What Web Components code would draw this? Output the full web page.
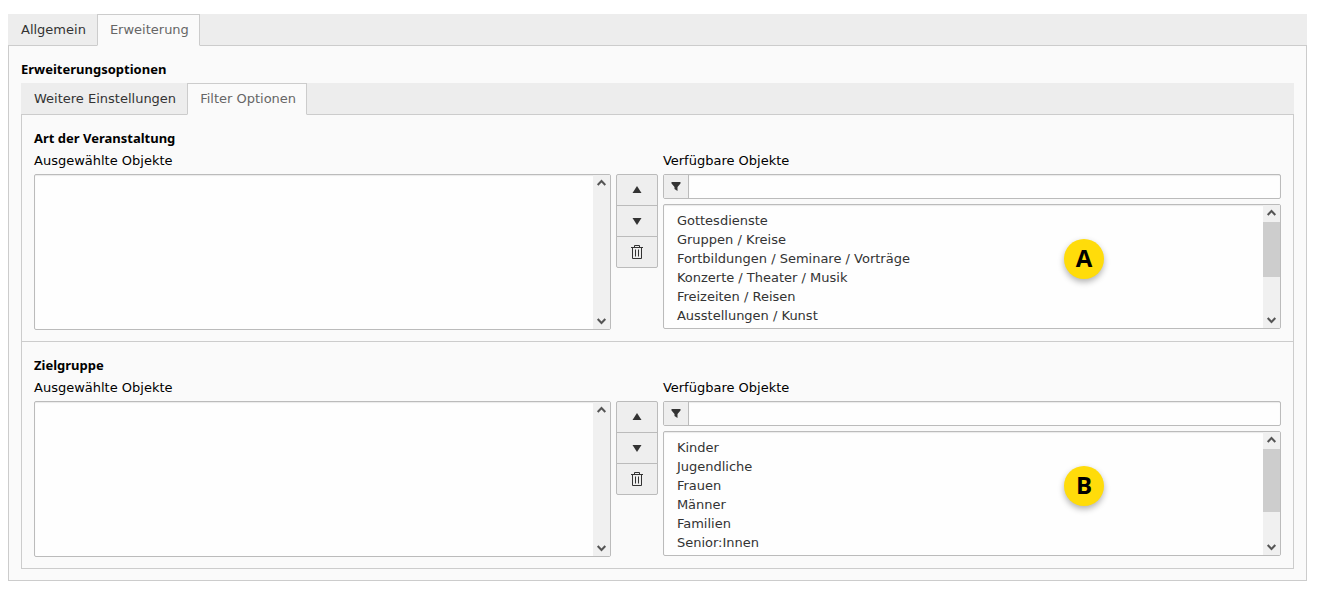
<!DOCTYPE html>
<html lang="de">
<head>
<meta charset="utf-8">
<title>Erweiterungsoptionen</title>
<style>
	body {
		margin: 14px 10px 10px 8px;
		background: #fff;
		color: #000;
		font: 13px/22px "DejaVu Sans", sans-serif;
	}
</style>
</head>
<body>
<tab-panel tabs="Allgemein,Erweiterung" active="1">
	<option-group heading="Erweiterungsoptionen">
		<tab-panel tabs="Weitere Einstellungen,Filter Optionen" active="1" flush>
			<object-picker heading="Art der Veranstaltung" marker="A" thumb="62%">
				<option>Gottesdienste</option>
				<option>Gruppen / Kreise</option>
				<option>Fortbildungen / Seminare / Vorträge</option>
				<option>Konzerte / Theater / Musik</option>
				<option>Freizeiten / Reisen</option>
				<option>Ausstellungen / Kunst</option>
			</object-picker>
			<object-picker heading="Zielgruppe" marker="B" thumb="71%">
				<option>Kinder</option>
				<option>Jugendliche</option>
				<option>Frauen</option>
				<option>Männer</option>
				<option>Familien</option>
				<option>Senior:Innen</option>
			</object-picker>
		</tab-panel>
	</option-group>
</tab-panel>

<script>
/**
 * Tab bar with a bordered panel below it.
 *
 * @attribute {string} tabs - Comma separated tab titles.
 * @attribute {number} active - Index of the active tab.
 * @attribute flush - Removes the padding of the panel.
 */
class TabPanel extends HTMLElement {
	connectedCallback() {
		const active = Number(this.getAttribute("active"));
		const tabs = this.getAttribute("tabs").split(",").map((title, index) =>
			`<button type="button" role="tab" aria-selected="${index === active}">${title}</button>`
		).join("");

		this.attachShadow({ mode: "open" }).innerHTML = `
			<style>
				:host {
					display: block;
				}

				nav {
					display: flex;
					height: 31px;
					background: #ededed;
				}

				button {
					box-sizing: border-box;
					height: 32px;
					padding: 0 10px 0 12px;
					border: 1px solid transparent;
					background: none;
					color: #333;
					font: inherit;
					line-height: 30px;
				}

				button[aria-selected="true"] {
					position: relative;
					border-color: #ccc;
					border-bottom-color: #fafafa;
					background: #fafafa;
					color: #666;
				}

				section {
					padding: 12px 12px 11px;
					border: 1px solid #ccc;
					background: #fafafa;
				}

				:host([flush]) section {
					padding: 0;
				}
			</style>
			<nav role="tablist">${tabs}</nav>
			<section role="tabpanel"><slot></slot></section>
		`;
	}
}

/**
 * Bold heading above a block of options.
 */
class OptionGroup extends HTMLElement {
	connectedCallback() {
		this.attachShadow({ mode: "open" }).innerHTML = `
			<style>
				:host {
					display: block;
				}

				h2 {
					margin: 0 0 3px;
					font: bold 13px/22px "Noto Sans", sans-serif;
				}
			</style>
			<h2>${this.getAttribute("heading")}</h2>
			<slot></slot>
		`;
	}
}

/**
 * Multi select list with a permanently visible scroll track.
 *
 * @attribute {string} label - Accessible name of the list.
 * @attribute {string} thumb - Length of the scroll thumb, none if left out.
 */
class ScrollList extends HTMLElement {
	connectedCallback() {
		const thumb = this.getAttribute("thumb");

		this.attachShadow({ mode: "open" }).innerHTML = `
			<style>
				:host {
					box-sizing: border-box;
					display: flex;
					border: 1px solid #bbb;
					border-radius: 2px;
					background: #fefefe;
					box-shadow: inset 0 1px 1px rgba(0, 0, 0, 0.08);
				}

				select {
					flex: 1;
					box-sizing: border-box;
					min-width: 0;
					height: 100%;
					padding: 8px 13px 0;
					border: 0;
					outline: 0;
					background: none;
					color: #333;
					font: inherit;
					overflow: hidden;
					scrollbar-width: none;
				}

				option {
					min-height: 19px;
					padding: 0;
					line-height: 19px;
				}

				.track {
					display: flex;
					flex-direction: column;
					width: 17px;
					background: #f0f0f0;
				}

				.rail {
					flex: 1;
				}

				.thumb {
					background: #cdcdcd;
				}

				svg {
					display: block;
					width: 17px;
					height: 17px;
					fill: none;
					stroke: #555;
					stroke-width: 2;
				}
			</style>
			<select multiple size="6" aria-label="${this.getAttribute("label")}"></select>
			<div class="track" aria-hidden="true">
				<svg viewBox="0 0 17 17"><path d="M4.7 10 8.5 6l3.8 4"/></svg>
				<div class="rail">${thumb ? `<div class="thumb" style="height: ${thumb}"></div>` : ""}</div>
				<svg viewBox="0 0 17 17"><path d="M4.700 7l3.800 4 3.800-4"/></svg>
			</div>
		`;
	}
}

/**
 * Round letter badge.
 */
class MarkerBadge extends HTMLElement {
	connectedCallback() {
		this.attachShadow({ mode: "open" }).innerHTML = `
			<style>
				:host {
					display: block;
					width: 40px;
					height: 40px;
					border-radius: 50%;
					background: #ffdc0a;
					box-shadow: 0 3px 6px rgba(0, 0, 0, 0.3);
					color: #000;
					font: bold 24px/38px "Open Sans", sans-serif;
					text-align: center;
				}
			</style>
			<slot></slot>
		`;
	}
}

/**
 * Two lists with move buttons between them and a filter above the right one.
 *
 * @attribute {string} heading - Title of the field.
 * @attribute {string} marker - Letter of the badge over the available objects.
 * @attribute {string} thumb - Length of the scroll thumb of the available objects.
 */
class ObjectPicker extends HTMLElement {
	connectedCallback() {
		this.attachShadow({ mode: "open" }).innerHTML = `
			<style>
				:host {
					display: block;
					padding: 12px 12px 11px;
				}

				:host(:not(:last-of-type)) {
					border-bottom: 1px solid #ccc;
				}

				h3 {
					margin: 0;
					font: bold 13px/22px "Noto Sans", sans-serif;
				}

				.columns {
					display: grid;
					grid-template-columns: minmax(0, 14fr) 42px minmax(0, 15fr);
					gap: 1px 5px;
				}

				label {
					line-height: 24px;
				}

				.available-label {
					grid-column: 3;
				}

				.selected {
					height: 156px;
				}

				.buttons {
					display: flex;
					flex-direction: column;
				}

				.buttons button {
					box-sizing: border-box;
					display: flex;
					align-items: center;
					justify-content: center;
					height: 32px;
					padding: 0;
					border: 1px solid #bbb;
					background: #eee;
					color: #333;
				}

				.buttons button + button {
					margin-top: -1px;
				}

				.buttons button:first-child {
					border-radius: 2px 2px 0 0;
				}

				.buttons button:last-child {
					border-radius: 0 0 2px 2px;
				}

				svg {
					display: block;
					width: 16px;
					height: 16px;
					fill: currentColor;
				}

				.available {
					display: flex;
					flex-direction: column;
					gap: 5px;
				}

				.filter {
					box-sizing: border-box;
					display: flex;
					height: 25px;
					border: 1px solid #bbb;
					border-radius: 2px;
					background: #fefefe;
				}

				.filter span {
					display: flex;
					align-items: center;
					justify-content: center;
					width: 24px;
					border-right: 1px solid #bbb;
					background: #eee;
					color: #333;
				}

				.filter input {
					flex: 1;
					min-width: 0;
					padding: 0 8px;
					border: 0;
					outline: 0;
					background: none;
					box-shadow: inset 0 1px 1px rgba(0, 0, 0, 0.08);
					font: inherit;
				}

				.list {
					position: relative;
				}

				.list scroll-list {
					height: 125px;
				}

				marker-badge {
					position: absolute;
					top: 35px;
					right: 177px;
				}
			</style>
			<h3>${this.getAttribute("heading")}</h3>
			<div class="columns">
				<label>Ausgewählte Objekte</label>
				<label class="available-label" for="filter">Verfügbare Objekte</label>
				<scroll-list class="selected" label="Ausgewählte Objekte"></scroll-list>
				<div class="buttons">
					<button type="button" aria-label="Nach oben"><svg viewBox="0 0 16 16"><path d="M8 4 12.500 11h-9z"/></svg></button>
					<button type="button" aria-label="Nach unten"><svg viewBox="0 0 16 16"><path d="M8 12 3.500 5h9z"/></svg></button>
					<button type="button" aria-label="Entfernen"><svg viewBox="0 0 16 16"><path fill="none" stroke="currentColor" d="M2 3.500h12M5.500 3.500v-2h5v2M3.500 3.500v11h9v-11M6.500 5.500v7M9.500 5.500v7"/></svg></button>
				</div>
				<div class="available">
					<div class="filter">
						<span><svg viewBox="0 0 16 16"><path d="M3.500 3h9v1.500L9.500 8v4l-3-2V8l-3-3.500z"/></svg></span>
						<input id="filter" type="text">
					</div>
					<div class="list">
						<scroll-list label="Verfügbare Objekte" thumb="${this.getAttribute("thumb")}"></scroll-list>
						<marker-badge>${this.getAttribute("marker")}</marker-badge>
					</div>
				</div>
			</div>
		`;

		// the options belong to the list of available objects
		const list = this.shadowRoot.querySelector(".list scroll-list");
		list.shadowRoot.querySelector("select").append(...this.querySelectorAll("option"));
	}
}

customElements.define("tab-panel", TabPanel);
customElements.define("option-group", OptionGroup);
customElements.define("scroll-list", ScrollList);
customElements.define("marker-badge", MarkerBadge);
customElements.define("object-picker", ObjectPicker);
</script>
</body>
</html>
